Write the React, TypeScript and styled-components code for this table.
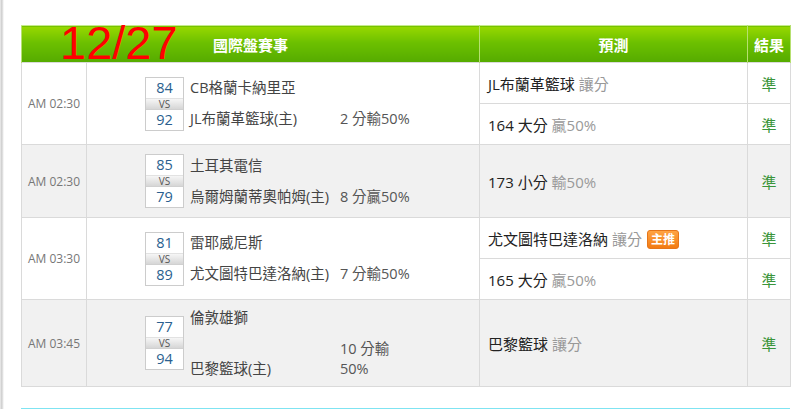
import React from "react";
import styled, { createGlobalStyle } from "styled-components";

const GlobalStyle = createGlobalStyle`
  html, body { overflow: hidden; }
  body {
    margin: 0;
    background: linear-gradient(to right, #f6f6f6 0, #d2d2d2 1px, #d2d2d2 2px, #ebebeb 3px, #ffffff 4px);
    font-family: "Open Sans", "Noto Sans CJK TC", sans-serif;
  }
`;

const Page = styled.div`
  padding: 25px 0 0 21px;
  width: 769px;
`;

const TableWrap = styled.div`
  position: relative;
`;

const DateStamp = styled.div`
  position: absolute;
  left: 39px;
  top: -6px;
  font-family: "Liberation Sans", Arial, sans-serif;
  font-size: 47px;
  line-height: 1;
  color: #ff0000;
  pointer-events: none;
`;

const Table = styled.table`
  width: 769px;
  border-collapse: collapse;
  table-layout: fixed;
`;

const HeadCell = styled.th`
  height: 36px;
  padding: 0;
  background: linear-gradient(#98d800 0%, #6cc000 45%, #55ab00 100%);
  border-top: 1px solid #c6ea8a;
  border-left: 1px solid #b6e070;
  border-right: 1px solid #b6e070;
  color: #ffffff;
  font-size: 15px;
  font-weight: bold;
  text-align: center;
`;

const Row = styled.tr<{ $shade?: boolean }>`
  background: ${(p) => (p.$shade ? "#f1f1f1" : "#ffffff")};
`;

const Cell = styled.td<{ $h?: number }>`
  border: 1px solid #dadada;
  padding: 0;
  height: ${(p) => (p.$h ? `${p.$h}px` : "auto")};
`;

const TimeCell = styled(Cell)`
  text-align: center;
  color: #777777;
  font-size: 12px;
`;

const MatchCell = styled(Cell)`
  padding-left: 58px;
`;

const MatchInner = styled.div`
  display: flex;
  align-items: center;
  gap: 6px;
`;

const ScoreBox = styled.div`
  width: 37px;
  border: 1px solid #cccccc;
  display: flex;
  flex-direction: column;
  background: #ffffff;
`;

const Score = styled.div`
  height: 20px;
  line-height: 20px;
  text-align: center;
  color: #2a5f8f;
  font-size: 14.5px;
`;

const Vs = styled.div`
  height: 10px;
  line-height: 10px;
  text-align: center;
  font-size: 10px;
  color: #555555;
  background: linear-gradient(#f6f6f6, #d6d6d6);
  border-top: 1px solid #e2e2e2;
  border-bottom: 1px solid #d0d0d0;
`;

const TeamGrid = styled.div<{ $nameW: number; $oddsW: number }>`
  display: grid;
  grid-template-columns: ${(p) => p.$nameW}px ${(p) => p.$oddsW}px;
  row-gap: 11px;
  align-items: end;
  font-size: 14.5px;
  line-height: 20px;
  color: #444444;
`;

const Name = styled.div<{ $row: number }>`
  grid-column: 1;
  grid-row: ${(p) => p.$row};
  white-space: nowrap;
`;

const Odds = styled.div`
  grid-column: 2;
  grid-row: 2;
  color: #555555;
`;

const PredCell = styled(Cell)`
  padding-left: 8px;
  font-size: 15px;
  color: #222222;
`;

const Muted = styled.span`
  color: #999999;
`;

const Badge = styled.span`
  display: inline-block;
  margin-left: 5px;
  padding: 0 3px;
  height: 17px;
  line-height: 17px;
  font-size: 12px;
  font-weight: bold;
  color: #ffffff;
  vertical-align: 1px;
  background: linear-gradient(#ffa444, #f27a12);
  border: 1px solid #e6761a;
  border-radius: 3px;
`;

const ResultCell = styled(Cell)`
  text-align: center;
  color: #3a953a;
  font-size: 15px;
`;

const NextHeader = styled.div`
  margin-top: 21px;
  display: grid;
  grid-template-columns: 489px 237px 43px;
  height: 30px;
  background: #4ed7ea;
  border-top: 1px solid #7fe4f2;
`;

const NextHeadCell = styled.div`
  border-left: 1px solid #8ae6f2;
  &:first-child { border-left: none; }
`;

type Pred = { main: string; sub: string; badge?: boolean };
type Match = {
  time: string;
  home: number;
  away: number;
  team1: string;
  team2: string;
  odds: string;
  shade: boolean;
  preds: Pred[];
  heights: number[];
};

const NAME_W = 150;
const ODDS_W = 74;

const matches: Match[] = [
  {
    time: "AM 02:30",
    home: 84,
    away: 92,
    team1: "CB格蘭卡納里亞",
    team2: "JL布蘭革籃球(主)",
    odds: "2 分輸50%",
    shade: false,
    preds: [
      { main: "JL布蘭革籃球", sub: "讓分" },
      { main: "164 大分", sub: "贏50%" },
    ],
    heights: [40, 40],
  },
  {
    time: "AM 02:30",
    home: 85,
    away: 79,
    team1: "土耳其電信",
    team2: "烏爾姆蘭蒂奧帕姆(主)",
    odds: "8 分贏50%",
    shade: true,
    preds: [{ main: "173 小分", sub: "輸50%" }],
    heights: [72],
  },
  {
    time: "AM 03:30",
    home: 81,
    away: 89,
    team1: "雷耶威尼斯",
    team2: "尤文圖特巴達洛納(主)",
    odds: "7 分輸50%",
    shade: false,
    preds: [
      { main: "尤文圖特巴達洛納", sub: "讓分", badge: true },
      { main: "165 大分", sub: "贏50%" },
    ],
    heights: [40, 40],
  },
  {
    time: "AM 03:45",
    home: 77,
    away: 94,
    team1: "倫敦雄獅",
    team2: "巴黎籃球(主)",
    odds: "10 分輸50%",
    shade: true,
    preds: [{ main: "巴黎籃球", sub: "讓分" }],
    heights: [86],
  },
];

function MatchRows({ m }: { m: Match }) {
  const span = m.preds.length;
  return (
    <>
      {m.preds.map((p, i) => (
        <Row key={i} $shade={m.shade}>
          {i === 0 && (
            <>
              <TimeCell rowSpan={span}>{m.time}</TimeCell>
              <MatchCell rowSpan={span}>
                <MatchInner>
                  <ScoreBox>
                    <Score>{m.home}</Score>
                    <Vs>VS</Vs>
                    <Score>{m.away}</Score>
                  </ScoreBox>
                  <TeamGrid $nameW={NAME_W} $oddsW={ODDS_W}>
                    <Name $row={1}>{m.team1}</Name>
                    <Name $row={2}>{m.team2}</Name>
                    <Odds>{m.odds}</Odds>
                  </TeamGrid>
                </MatchInner>
              </MatchCell>
            </>
          )}
          <PredCell $h={m.heights[i]}>
            {p.main} <Muted>{p.sub}</Muted>
            {p.badge && <Badge>主推</Badge>}
          </PredCell>
          <ResultCell $h={m.heights[i]}>準</ResultCell>
        </Row>
      ))}
    </>
  );
}

export default function App() {
  return (
    <>
      <GlobalStyle />
      <Page>
        <TableWrap>
          <Table>
            <colgroup>
              <col style={{ width: 65 }} />
              <col style={{ width: 393 }} />
              <col style={{ width: 268 }} />
              <col style={{ width: 43 }} />
            </colgroup>
            <thead>
              <tr>
                <HeadCell colSpan={2}>國際盤賽事</HeadCell>
                <HeadCell>預測</HeadCell>
                <HeadCell>結果</HeadCell>
              </tr>
            </thead>
            <tbody>
              {matches.map((m, i) => (
                <MatchRows key={i} m={m} />
              ))}
            </tbody>
          </Table>
          <DateStamp>12/27</DateStamp>
        </TableWrap>
        <NextHeader>
          <NextHeadCell />
          <NextHeadCell />
          <NextHeadCell />
        </NextHeader>
      </Page>
    </>
  );
}
